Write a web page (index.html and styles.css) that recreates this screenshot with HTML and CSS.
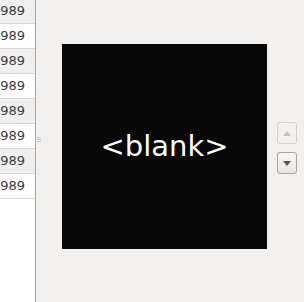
FILE: index.html
```html
<!DOCTYPE html>
<html>
<head>
<meta charset="utf-8">
<link rel="stylesheet" href="styles.css">
</head>
<body>
<div class="window">
  <div class="list">
    <div class="rows">
      <div class="row odd"><span>989</span></div>
      <div class="row"><span>989</span></div>
      <div class="row odd"><span>989</span></div>
      <div class="row"><span>989</span></div>
      <div class="row odd"><span>989</span></div>
      <div class="row"><span>989</span></div>
      <div class="row odd"><span>989</span></div>
      <div class="row"><span>989</span></div>
    </div>
  </div>
  <div class="pane">
    <div class="grip"><span></span><span></span><span></span></div>
    <div class="stage"><div class="preview">&lt;blank&gt;</div></div>
    <div class="spin">
      <button class="btn disabled" aria-label="Up"><svg width="8" height="5" viewBox="0 0 8 5"><path d="M0 5 L4 0 L8 5 Z" fill="#c4c2c0"/></svg></button>
      <button class="btn" aria-label="Down"><svg width="8" height="5" viewBox="0 0 8 5"><path d="M0 0 L8 0 L4 5 Z" fill="#555753"/></svg></button>
    </div>
  </div>
</div>
</body>
</html>
```
FILE: styles.css
```css
html, body {
  margin: 0;
  padding: 0;
  background: #f2f1f0;
}
.window {
  display: flex;
  width: 304px;
  height: 302px;
  overflow: hidden;
  font-family: "DejaVu Sans", sans-serif;
}
.list {
  width: 35px;
  flex: none;
  background: #ffffff;
  border-right: 1px solid #aba7a3;
  overflow: hidden;
}
.rows {
  margin-top: -1px;
}
.row {
  height: 24px;
  line-height: 24px;
  border-bottom: 1px solid #d9d8d7;
  display: flex;
  justify-content: flex-end;
  padding-right: 10px;
  font-size: 13px;
  color: #3b3b3b;
  white-space: nowrap;
  background: #ffffff;
  overflow: hidden;
}
.row span {
  flex: none;
}
.row.odd {
  background: #efefef;
}
.pane {
  flex: 1;
  display: flex;
  align-items: flex-start;
}
.grip {
  width: 6px;
  flex: none;
  margin-top: 137px;
  display: flex;
  flex-direction: column;
  align-items: center;
  gap: 1px;
}
.grip span {
  display: block;
  width: 4px;
  height: 1px;
  background: #c6c3c0;
}
.stage {
  margin-left: 20px;
  margin-top: 44px;
}
.preview {
  width: 205px;
  height: 205px;
  background: #080808;
  color: #ffffff;
  display: flex;
  align-items: center;
  justify-content: center;
  font-size: 29px;
  padding-bottom: 2px;
  box-sizing: border-box;
}
.spin {
  margin-left: 10px;
  margin-top: 122px;
  display: flex;
  flex-direction: column;
  gap: 8px;
}
.btn {
  width: 20px;
  height: 22px;
  box-sizing: border-box;
  padding: 0;
  margin: 0;
  border: 1px solid #a8a4a0;
  border-radius: 3px;
  background: linear-gradient(#f7f7f6, #e8e6e4);
  display: flex;
  align-items: center;
  justify-content: center;
}
.btn.disabled {
  border-color: #d2cfcc;
  background: #f2f1f0;
}
```
